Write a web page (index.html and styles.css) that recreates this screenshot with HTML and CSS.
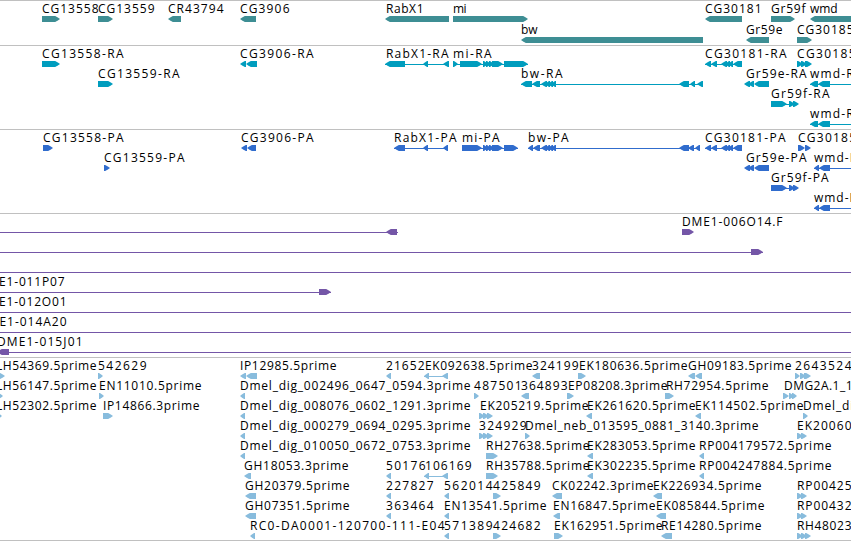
FILE: index.html
```html
<!DOCTYPE html>
<html lang="en">
<head>
<meta charset="utf-8">
<title>Genome tracks</title>
<link rel="stylesheet" href="styles.css">
</head>
<body>
<main class="browser" id="browser"></main>
<script src="tracks.js"></script>
</body>
</html>
```
FILE: styles.css
```css
body {
  margin: 0;
  background: #fff;
}
.browser {
  display: flex;
  flex-direction: column;
  width: 851px;
  height: 541px;
  overflow: hidden;
}
.track {
  flex: none;
  box-sizing: border-box;
  border-top: 1px solid #c0c0c0;
  overflow: hidden;
}
.track svg { display: block; }
.track text {
  font-family: "Open Sans", "Noto Sans", "DejaVu Sans", sans-serif;
  font-size: 12px;
  fill: #000;
}
.gene { height: 45px; color: #3e8e94; }
.transcript { height: 84px; color: #009dbe; }
.protein { height: 84px; color: #306ccd; }
.clone { height: 144px; color: #7456a7; }
.est { height: 184px; color: #88bcdd; border-bottom: 1px solid #c0c0c0; }
.glyph { fill: currentColor; }
```
FILE: tracks.js
```js
// Feature: [label, label start, label end, strand, exons "a:b,...", intron line "a:b"]
// A colon separates the two ends so that positions can run past the left edge.
const bwRight = "679:689,690:695,697:703";
const miMid = "483:486,486:489,489:492,492:503";
const cg181 = "705:711,711:717,721:727,727:730,730:733,733:742";
const tracks = [
  { name: "gene", step: 21, rows: [
    [["CG13558",42,98,"R","42:60"],["CG13559",98,154,"R","98:113"],["CR43794",168,223,"L","168:181"],
     ["CG3906",240,289,"L","240:256"],["RabX1",386,423,"L","385:449"],["mi",453,466,"R","453:528"],
     ["CG30181",705,761,"L","705:742"],["Gr59f",771,805,"R","771:795"],["wmd",810,837,"L","810:870"]],
    [["bw",521,537,"L","521:703"],["Gr59e",746,782,"L","746:769"],["CG30185",797,853,"R","797:812"]]
  ]},
  { name: "transcript", step: 20, rows: [
    [["CG13558-RA",42,123,"R","42:60"],["CG3906-RA",240,313,"L","240:246,246:257"],
     ["RabX1-RA",386,448,"L","385:405,423:428,443:449","385:449"],
     ["mi-RA",453,491,"R","453:458,460:482,"+miMid+",504:528","453:528"],
     ["CG30181-RA",705,786,"L",cg181,"705:742"],["CG30185-RA",797,878,"R","797:801,801:805,805:812"]],
    [["CG13559-RA",98,179,"R","98:113"],
     ["bw-RA",521,562,"L","521:532,532:540,541:547,547:550,550:553,553:556,"+bwRight,"521:703"],
     ["Gr59e-RA",746,806,"L","746:750,750:754,754:769"],["wmd-RA",810,862,"L","810:818,818:830","810:870"]],
    [["Gr59f-RA",771,829,"R","771:787,789:793,793:797","771:797"]],
    [["wmd-RB",810,862,"L","810:818,818:830","810:870"]]
  ]},
  { name: "protein", step: 20, rows: [
    [["CG13558-PA",43,123,"R","43:53"],["CG3906-PA",241,313,"L","241:247,247:256"],
     ["RabX1-PA",394,456,"L","394:405,423:428,443:448","394:448"],
     ["mi-PA",462,499,"R","462:482,"+miMid+",504:518","462:518"],
     ["bw-PA",528,568,"L","528:533,533:540,541:547,547:550,550:553,553:556,679:689,690:694,695:700","528:700"],
     ["CG30181-PA",705,785,"L",cg181,"705:742"],["CG30185-PA",798,878,"R","798:805,805:811"]],
    [["CG13559-PA",104,184,"R","104:110"],["Gr59e-PA",746,806,"L","746:750,750:754,754:769"],
     ["wmd-PA",814,865,"L","814:819,819:830","814:870"]],
    [["Gr59f-PA",771,828,"R","771:787,789:793,793:797","771:797"]],
    [["wmd-PB",814,865,"L","814:819,819:830","814:870"]]
  ]},
  { name: "clone", step: 20, rows: [
    [["",0,0,"L","386:397","0:398"],["DME1-006O14.F",682,782,"R","682:694"]],
    [["",0,0,"R","751:763","0:763"]],
    [["",0,0,"R","","0:851"]],
    [["DME1-011P07",-22,64,"R","319:331","0:331"]],
    [["DME1-012O01",-22,66,"R","","0:851"]],
    [["DME1-014A20",-22,66,"R","","0:851"]],
    [["DME1-015J01",-3,82,"L","-3:9","0:851"]]
  ]},
  { name: "est", step: 20, rows: [
    [["LH54369.5prime",-4,96,"R","-1:5"],["542629",98,146,"R","98:103"],["IP12985.5prime",240,336,"L","240:246,246:257"],
     ["21652",386,424,"L","386:391"],["EK092638.5prime",425,532,"L","424:429,442:448","424:448"],
     ["324199",532,578,"L","532:540"],["EK180636.5prime",579,687,"R","578:586"],
     ["GH09183.5prime",688,791,"L","688:695,695:702"],["2643524",795,851,"R","795:800,800:804,804:811"]],
    [["LH56147.5prime",-4,96,"R","-2:3"],["EN11010.5prime",99,201,"R","99:104"],
     ["Dmel_dig_002496_0647_0594.3prime",240,470,"L","240:245"],["487501",474,521,"R","474:479"],
     ["364893",521,567,"L","521:529"],["EP08208.3prime",568,667,"R","567:574"],
     ["RH72954.5prime",666,768,"R","665:674"],["DMG2A.1_1",784,852,"R","783:789,789:792,792:797"]],
    [["LH52302.5prime",-4,96,"R","-3:2"],["IP14866.3prime",103,199,"R","103:113"],
     ["Dmel_dig_008076_0602_1291.3prime",240,470,"L","240:245"],["EK205219.5prime",480,588,"R","479:483,483:487,487:491"],
     ["EK261620.5prime",587,695,"L","586:592"],["EK114502.5prime",695,803,"L","695:701"],["Dmel_dig",803,860,"R","803:808"]],
    [["Dmel_dig_000279_0694_0295.3prime",240,470,"L","240:245"],["324929",479,526,"R","479:483,483:487,487:491"],
     ["Dmel_neb_013595_0881_3140.3prime",525,758,"R","525:530"],["EK20060",797,851,"R","797:801,801:805"]],
    [["Dmel_dig_010050_0672_0753.3prime",240,470,"L","240:245"],["RH27638.5prime",486,589,"R","486:498"],
     ["EK283053.5prime",587,695,"L","587:593"],["RP004179572.5prime",699,831,"L","699:704"]],
    [["GH18053.3prime",244,348,"L","244:251"],["50176",386,425,"L","386:391"],
     ["106169",425,471,"L","424:429,442:448","424:448"],["RH35788.5prime",486,589,"R","486:498"],
     ["EK302235.5prime",587,695,"L","587:593"],["RP004247884.5prime",699,831,"L","699:704"]],
    [["GH20379.5prime",245,349,"L","245:256"],["227827",386,433,"L","386:391"],["562014",444,492,"L","444:449"],
     ["425849",493,540,"R","493:501"],["CK02242.3prime",552,653,"L","552:562"],
     ["EK226934.5prime",653,761,"L","653:662"],["RP00425",797,851,"R","797:801,801:805"]],
    [["GH07351.5prime",245,349,"L","245:256"],["363464",386,433,"L","386:391"],["EN13541.5prime",444,546,"L","444:449"],
     ["EN16847.5prime",553,655,"L","553:560"],["EK085844.5prime",656,764,"L","656:666"],["RP00432",797,851,"R","797:801,801:805"]],
    [["RC0-DA0001-120700-111-E04",250,444,"L","250:255"],["571389",444,492,"L","444:449"],
     ["424682",493,540,"R","493:501"],["EK162951.5prime",554,662,"R","554:563"],
     ["RE14280.5prime",661,761,"L","661:672"],["RH48023",797,851,"R","797:801,801:805,805:811"]]
  ]}
];

const ends = s => s.split(":").map(Number);

function exon(a, b, strand, y) {
  // Very short exons get a longer tip that runs into the next one.
  const extra = b - a < 5 ? 2 : 0;
  if (strand === "R") b += extra; else a -= extra;
  const t = Math.min(6, b - a);
  const pts = strand === "R"
    ? [[a, y], [b - t * 0.8, y], [b - t * 0.3, y + 1.7], [b, y + 3], [b - t * 0.3, y + 4.3], [b - t * 0.8, y + 6], [a, y + 6]]
    : [[b, y], [a + t * 0.8, y], [a + t * 0.3, y + 1.7], [a, y + 3], [a + t * 0.3, y + 4.3], [a + t * 0.8, y + 6], [b, y + 6]];
  return `<polygon class="glyph" points="${pts.join(" ")}"/>`;
}

function feature([label, x1, x2, strand, exons, line], base) {
  let out = "";
  if (label) out += `<text x="${x1}" y="${base}" textLength="${x2 - x1 + 0.5}">${label}</text>`;
  if (line) {
    const [a, b] = ends(line);
    out += `<rect class="glyph" x="${a}" y="${base + 6}" width="${b - a}" height="1"/>`;
  }
  if (exons) for (const e of exons.split(",")) out += exon(...ends(e), strand, base + 3);
  return out;
}

document.getElementById("browser").innerHTML = tracks.map(t =>
  `<section class="track ${t.name}"><svg width="851" height="182">` +
  t.rows.map((row, i) => row.map(f => feature(f, 12 + i * t.step)).join("")).join("") +
  `</svg></section>`).join("");
```
